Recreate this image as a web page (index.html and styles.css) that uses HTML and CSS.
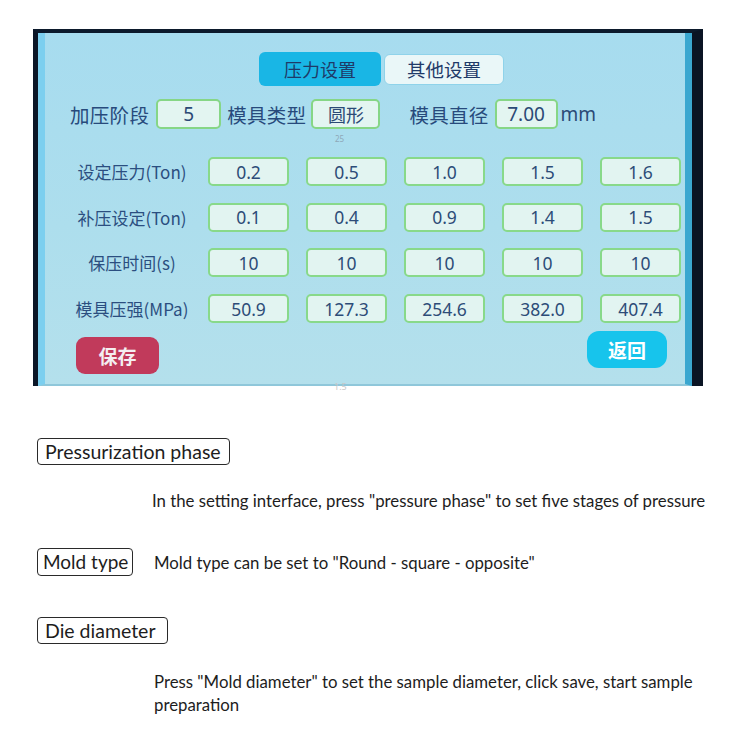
FILE: index.html
```html
<!DOCTYPE html>
<html lang="zh">
<head>
<meta charset="utf-8">
<title>压力设置</title>
<link rel="stylesheet" href="styles.css">
</head>
<body>
<div class="page">
  <div class="screen">
    <div class="panel">
      <div class="tabs">
        <div class="tab tab-active">压力设置</div>
        <div class="tab tab-idle">其他设置</div>
      </div>
      <div class="toprow">
        <span class="big-label">加压阶段</span>
        <span class="field f-stage">5</span>
        <span class="big-label l-type">模具类型</span>
        <span class="field f-type">圆形</span>
        <span class="big-label l-dia">模具直径</span>
        <span class="field f-dia">7.00</span>
        <span class="unit">mm</span>
        <span class="tiny t-25">25</span>
      </div>
      <div class="grid">
        <div class="row-label">设定压力(Ton)</div>
        <div class="cell">0.2</div><div class="cell">0.5</div><div class="cell">1.0</div><div class="cell">1.5</div><div class="cell">1.6</div>
        <div class="row-label">补压设定(Ton)</div>
        <div class="cell">0.1</div><div class="cell">0.4</div><div class="cell">0.9</div><div class="cell">1.4</div><div class="cell">1.5</div>
        <div class="row-label">保压时间(s)</div>
        <div class="cell">10</div><div class="cell">10</div><div class="cell">10</div><div class="cell">10</div><div class="cell">10</div>
        <div class="row-label">模具压强(MPa)</div>
        <div class="cell">50.9</div><div class="cell">127.3</div><div class="cell">254.6</div><div class="cell">382.0</div><div class="cell">407.4</div>
      </div>
      <div class="actions">
        <div class="btn btn-save">保存</div>
        <div class="btn btn-back">返回</div>
      </div>
    </div>
    <span class="tiny t-15">1.5</span>
  </div>

  <div class="notes">
    <div class="tag tag-phase">Pressurization phase</div>
    <p class="desc d-phase">In the setting interface, press "pressure phase" to set five stages of pressure</p>
    <div class="line-mold">
      <div class="tag">Mold type</div>
      <p class="desc-inline">Mold type can be set to "Round - square - opposite"</p>
    </div>
    <div class="tag tag-die">Die diameter</div>
    <p class="desc d-die">Press "Mold diameter" to set the sample diameter, click save, start sample preparation</p>
  </div>
</div>
</body>
</html>
```

FILE: styles.css
```css
html, body {
  margin: 0;
  padding: 0;
  background: #ffffff;
}

.page {
  width: 750px;
  height: 749px;
  overflow: hidden;
  padding-top: 29px;
  box-sizing: border-box;
}

.screen {
  position: relative;
  margin-left: 33px;
  width: 670px;
  height: 357px;
  box-sizing: border-box;
  border-top: 4px solid #0c1a2c;
  border-left: 5px solid #0b1627;
  border-right: 11px solid #0a1424;
  background: #0a1424;
}

.panel {
  height: 353px;
  box-sizing: border-box;
  border-left: 7px solid #7ccfef;
  border-right: 7px solid #3aa7d0;
  border-bottom: 2px solid #8fc7da;
  background: linear-gradient(180deg, #a7dcef 0%, #addeed 55%, #b4e0ec 100%);
  font-family: "Noto Sans CJK SC", "Noto Sans", sans-serif;
  color: #24406e;
}

.tabs {
  display: flex;
  align-items: center;
  gap: 3px;
  padding-top: 19px;
  padding-left: 214px;
  height: 34px;
}

.tab {
  display: flex;
  align-items: center;
  justify-content: center;
  font-size: 18px;
  border-radius: 6px;
  color: #1f3a68;
}

.tab-active {
  width: 122px;
  height: 34px;
  background: #19b6e5;
}

.tab-idle {
  width: 118px;
  height: 29px;
  background: #eaf7f8;
  border: 1px solid #8fd3ea;
  font-size: 18.5px;
}

.toprow {
  position: relative;
  display: flex;
  align-items: center;
  margin-top: 13px;
  padding-left: 25px;
  height: 30px;
}

.big-label {
  font-size: 19.5px;
  letter-spacing: 0.3px;
  color: #274a7c;
}

.field {
  display: flex;
  align-items: center;
  justify-content: center;
  box-sizing: border-box;
  background: #e3f5f1;
  border: 2px solid #86d686;
  border-radius: 5px;
  font-family: "Noto Sans", "Noto Sans CJK SC", sans-serif;
  font-size: 19px;
  color: #2b4a76;
  height: 30px;
}

.f-stage { width: 65px; margin-left: 7px; }
.l-type { margin-left: 6px; }
.f-type { width: 69px; margin-left: 5px; font-family: "Noto Sans CJK SC", sans-serif; font-size: 18px; }
.l-dia { margin-left: 29px; }
.f-dia { width: 63px; margin-left: 6px; }

.unit {
  margin-left: 3px;
  font-family: "Noto Sans", sans-serif;
  font-size: 19px;
  color: #2b4a76;
}

.tiny {
  position: absolute;
  font-family: "Noto Sans", sans-serif;
  font-size: 8px;
  color: #8ea8b8;
}

.t-25 { left: 290px; top: 34px; }
.t-15 { left: 296px; top: 347px; color: #c8c8c8; font-size: 9px; }

.grid {
  display: grid;
  grid-template-columns: 118px repeat(5, 81px);
  column-gap: 17px;
  row-gap: 16.7px;
  grid-auto-rows: 29px;
  margin-top: 28px;
  margin-left: 28px;
}

.grid .row-label {
  display: flex;
  align-items: center;
  justify-content: center;
  font-size: 17px;
  color: #2b4e80;
  white-space: nowrap;
}

.cell {
  display: flex;
  align-items: center;
  justify-content: center;
  box-sizing: border-box;
  background: #e2f4f1;
  border: 2px solid #88d98a;
  border-radius: 5px;
  font-family: "Noto Sans", sans-serif;
  font-size: 17.5px;
  color: #2d4c78;
}

.actions {
  display: flex;
  justify-content: space-between;
  align-items: flex-start;
  margin-top: 8px;
  padding-left: 31px;
  padding-right: 18px;
}

.btn {
  display: flex;
  align-items: center;
  justify-content: center;
  color: #ffffff;
  font-weight: 700;
  font-size: 19px;
  border-radius: 9px;
}

.btn-save {
  width: 83px;
  height: 37px;
  margin-top: 6px;
  background: #c13a5b;
  color: #f4eef1;
}

.btn-back {
  width: 80px;
  height: 37px;
  background: #17c4ec;
  border-radius: 12px;
}

.notes {
  font-family: "Lato", "Liberation Sans", sans-serif;
  color: #1d1d1d;
}

.tag {
  display: inline-block;
  box-sizing: border-box;
  height: 27px;
  line-height: 25px;
  padding: 0 7px;
  border: 1px solid #2a2a2a;
  border-radius: 4px;
  font-size: 19.5px;
  white-space: nowrap;
}

.tag-phase {
  margin-top: 52px;
  margin-left: 37px;
  width: 193px;
}

.desc {
  margin: 0;
  font-size: 16.8px;
  line-height: 23px;
}

.d-phase {
  margin-top: 24px;
  margin-left: 152px;
}

.line-mold {
  display: flex;
  align-items: center;
  margin-top: 36px;
  margin-left: 37px;
}

.line-mold .tag {
  width: 96px;
  height: 28px;
  padding: 0 5px;
  font-size: 19px;
}

.desc-inline {
  margin: 0 0 0 21px;
  font-size: 16.8px;
}

.tag-die {
  margin-top: 41px;
  margin-left: 37px;
  width: 131px;
}

.d-die {
  margin-top: 26px;
  margin-left: 154px;
  width: 560px;
}
```
